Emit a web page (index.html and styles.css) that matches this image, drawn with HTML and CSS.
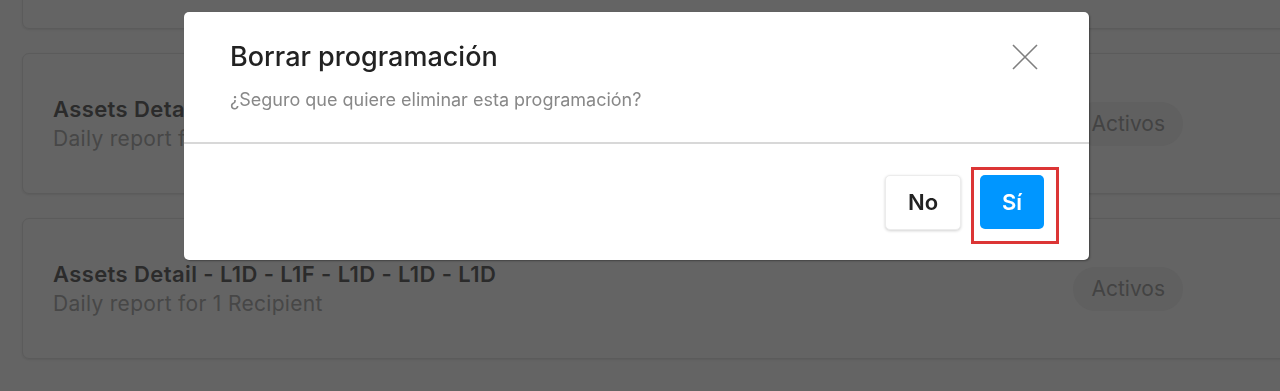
FILE: index.html
```html
<!DOCTYPE html>
<html lang="es">
<head>
<meta charset="utf-8">
<title>Borrar programación</title>
<link rel="stylesheet" href="styles.css">
</head>
<body>
<main class="list">
  <section class="card">
    <div class="card-text">
      <div class="card-title">Assets Detail - L1D - L1F - L1D - L1D - L1D</div>
      <div class="card-sub">Daily report for 1 Recipient</div>
    </div>
    <span class="pill">Activos</span>
  </section>
  <section class="card">
    <div class="card-text">
      <div class="card-title">Assets Detail - L1D - L1F - L1D - L1D - L1D</div>
      <div class="card-sub">Daily report for 1 Recipient</div>
    </div>
    <span class="pill">Activos</span>
  </section>
  <section class="card">
    <div class="card-text">
      <div class="card-title">Assets Detail - L1D - L1F - L1D - L1D - L1D</div>
      <div class="card-sub">Daily report for 1 Recipient</div>
    </div>
    <span class="pill">Activos</span>
  </section>
</main>

<div class="overlay">
  <div class="dialog" role="dialog">
    <header class="dialog-head">
      <div class="head-text">
        <h2 class="dialog-title">Borrar programación</h2>
        <p class="dialog-msg">¿Seguro que quiere eliminar esta programación?</p>
      </div>
      <button class="close" aria-label="Cerrar">
        <svg width="26" height="26" viewBox="0 0 26 26"><path d="M1 1 L25 25 M25 1 L1 25" stroke="#7f7f7f" stroke-width="1.6" fill="none"/></svg>
      </button>
    </header>
    <footer class="dialog-foot">
      <button class="btn btn-no">No</button>
      <span class="yes-wrap">
        <button class="btn btn-yes">Sí</button>
        <span class="highlight"></span>
      </span>
    </footer>
  </div>
</div>
</body>
</html>
```

FILE: styles.css
```css
* { box-sizing: border-box; }
html, body { margin: 0; padding: 0; }
body {
  background: #646464;
  font-family: Inter, "Noto Sans", sans-serif;
  width: 1280px;
  height: 391px;
  overflow: hidden;
}
.list {
  display: flex;
  flex-direction: column;
  gap: 24px;
  margin-top: -112px;
  padding-left: 22px;
  width: 1400px;
}
.card {
  height: 141px;
  width: 1300px;
  border: 1px solid #5b5b5b;
  border-radius: 7px;
  box-shadow: 0 1px 2px rgba(0,0,0,0.08);
  display: flex;
  align-items: center;
  justify-content: space-between;
  padding: 0 138px 0 30px;
}
.card-title {
  font-size: 22px;
  font-weight: 600;
  color: #2b2b2b;
  line-height: 26px;
  letter-spacing: 0.4px;
}
.card-sub {
  font-size: 21px;
  color: #474747;
  line-height: 26px;
  margin-top: 4px;
  letter-spacing: 0.3px;
}
.pill {
  display: inline-flex;
  align-items: center;
  height: 44px;
  padding: 0 18px;
  border-radius: 22px;
  background: #606060;
  color: #434343;
  font-size: 21px;
}
.overlay {
  position: fixed;
  inset: 0;
  padding: 12px 0 0 184px;
}
.dialog {
  width: 905px;
  height: 248px;
  background: #fff;
  border-radius: 5px;
  box-shadow: 1px 1px 2px rgba(0,0,0,0.35);
  display: flex;
  flex-direction: column;
}
.dialog-head {
  height: 132px;
  border-bottom: 2px solid #d8d8d8;
  display: flex;
  justify-content: space-between;
  align-items: flex-start;
  padding: 29px 51px 0 46px;
}
.dialog-title {
  margin: 0;
  font-size: 27px;
  font-weight: 500;
  line-height: 32px;
  color: #222;
}
.dialog-msg {
  margin: 16px 0 0;
  font-size: 18px;
  line-height: 22px;
  color: #888;
}
.close {
  border: 0;
  background: none;
  padding: 0;
  margin-top: 3px;
  width: 26px;
  height: 26px;
  display: block;
}
.close svg { display: block; }
.dialog-foot {
  flex: 1;
  display: flex;
  justify-content: flex-end;
  align-items: center;
  gap: 19px;
  padding: 0 45px 0 0;
}
.btn {
  font-family: Inter, "Noto Sans", sans-serif;
  font-size: 22px;
  font-weight: 600;
  border-radius: 5px;
  height: 55px;
  cursor: pointer;
}
.btn-no {
  width: 76px;
  background: #fff;
  color: #222;
  border: 1px solid #ececec;
  box-shadow: 0 1px 3px rgba(0,0,0,0.18);
}
.btn-yes {
  width: 64px;
  height: 54px;
  background: #0096ff;
  color: #fff;
  border: 0;
  display: block;
}
.yes-wrap {
  position: relative;
  display: block;
}
.highlight {
  position: absolute;
  left: -9px;
  top: -8px;
  right: -15px;
  bottom: -15px;
  border: 3px solid #dc3535;
  pointer-events: none;
}
```
